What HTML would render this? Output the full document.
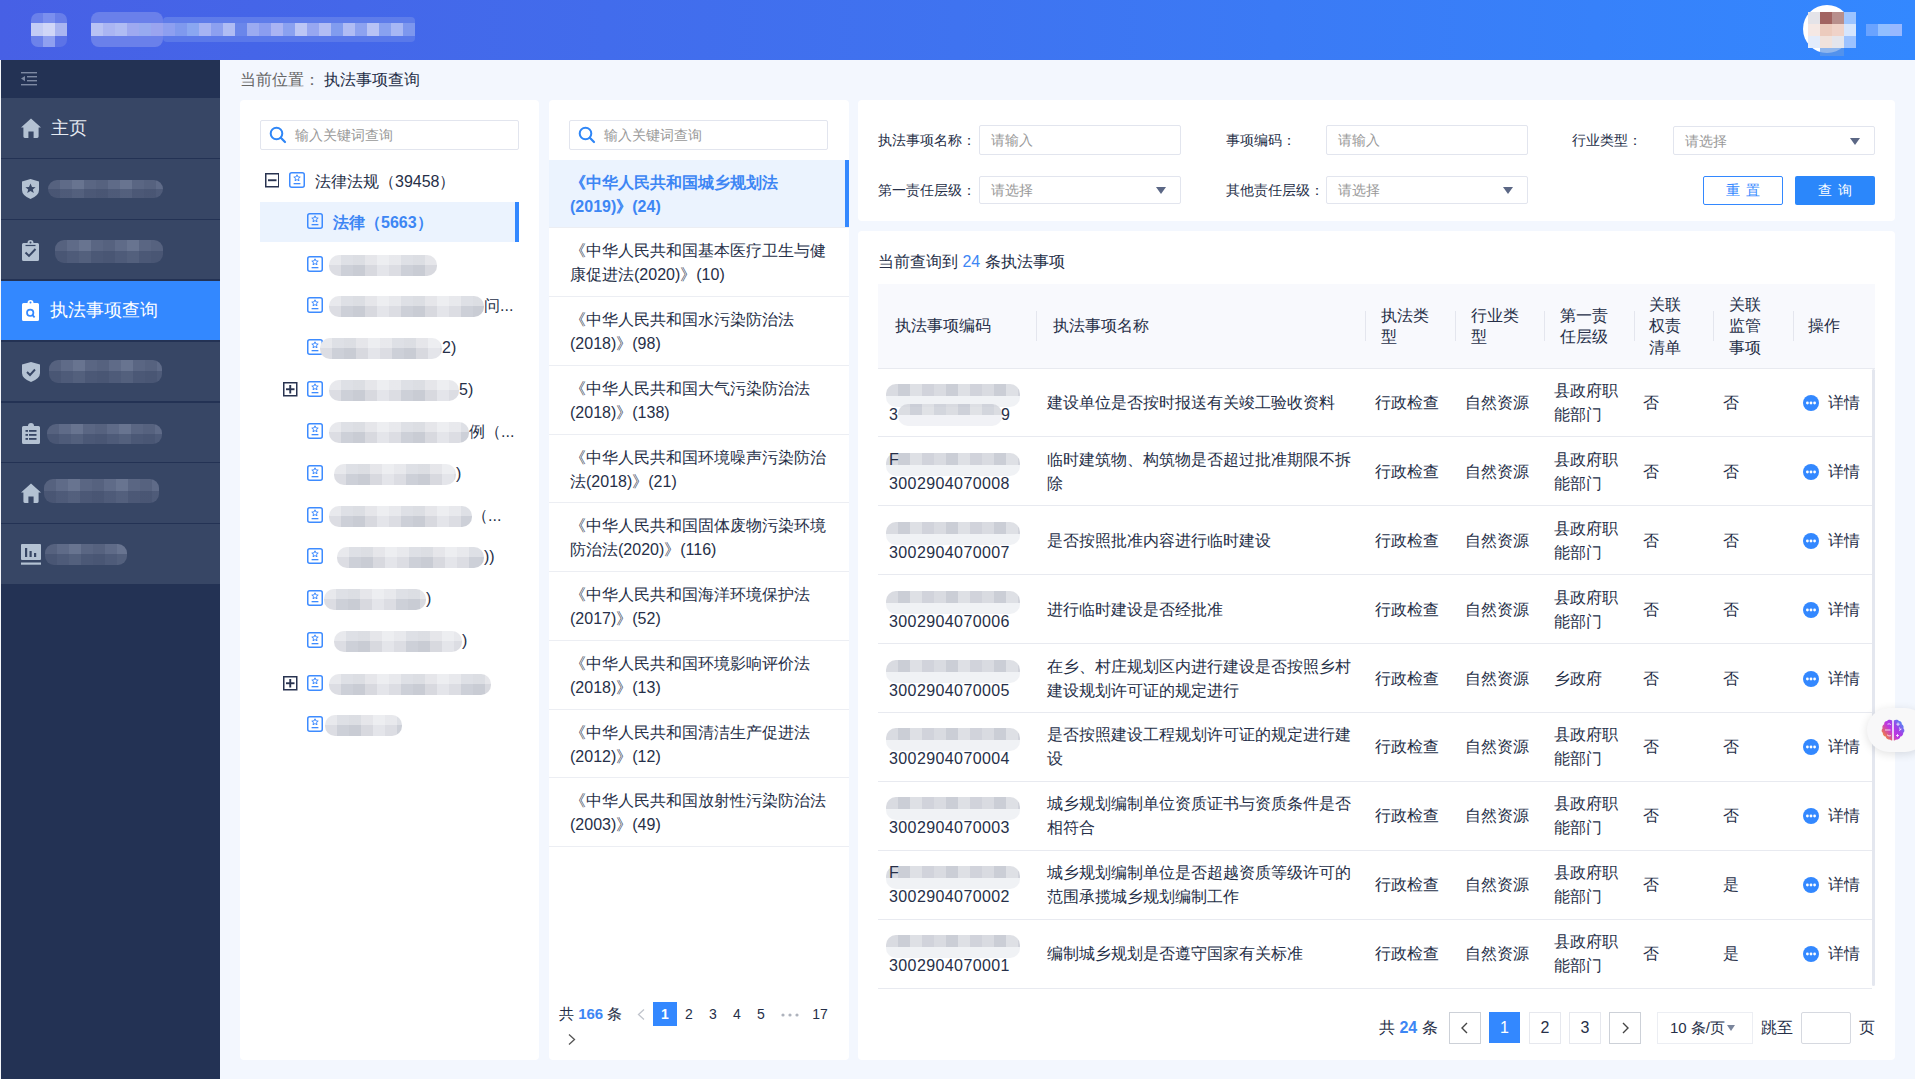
<!DOCTYPE html>
<html><head><meta charset="utf-8">
<style>
*{margin:0;padding:0;box-sizing:border-box}
html,body{width:1915px;height:1079px;overflow:hidden}
body{background:#f3f7fe;font-family:"Liberation Sans",sans-serif;position:relative;color:#262f48;font-size:16px}
.abs{position:absolute}
.hdr{left:0;top:0;width:1915px;height:60px;background:linear-gradient(90deg,#4760e5 0%,#3f73f0 50%,#3388ff 100%)}
.side{left:0;top:60px;width:220px;height:1019px;background:#233254}
.side .bl{position:absolute;left:0;top:0;width:1px;height:1019px;background:#f4f6fa}
.mi{position:absolute;left:1px;width:219px;height:60px;background:#3a4766;color:#fff;font-size:18px;line-height:60px}
.mi.act{background:#3388ff}
.mi svg{position:absolute;left:20px;top:20px}
.mi .t{position:absolute;left:50px;top:0}
.blur{position:absolute;border-radius:8px}
.panel{background:#fff;border-radius:4px}
.crumb{left:240px;top:69px;font-size:16px;line-height:22px;color:#262f48}
</style></head>
<body>
<div class="abs hdr">
  <div class="abs" style="left:31px;top:13px;width:36px;height:34px;border-radius:7px;overflow:hidden;display:grid;grid-template-columns:12px 12px 12px;grid-template-rows:10px 13px 11px">
   <i style="background:#6a80ea"></i><i style="background:#7b8fee"></i><i style="background:#687ee9"></i>
   <i style="background:#c3ccf5"></i><i style="background:#d0d6f7"></i><i style="background:#a9b5f1"></i>
   <i style="background:#6c82ea"></i><i style="background:#8fa0f0"></i><i style="background:#5c73e7"></i>
  </div>
  <div class="abs" style="left:91px;top:12px;width:72px;height:35px;border-radius:8px;overflow:hidden;background:linear-gradient(180deg,#6a80ea 0 11px,rgba(0,0,0,0) 11px 24px,#6a80ea 24px 35px)"></div>
  <div class="abs" style="left:91px;top:23px;width:324px;height:13px;background:linear-gradient(90deg,#b8c2f4 0 12px,#aab5f2 12px 24px,#b0bcf3 24px 36px,#9ea9f0 36px 48px,#97aaf0 48px 60px,#9aa4ef 60px 72px,#8d9ff0 72px 84px,#7f99ee 84px 96px,#8aa7f1 96px 108px,#a6b3f3 108px 120px,#8ca0f0 120px 132px,#afbcf4 132px 144px,#6a86ea 144px 156px,#9babf1 156px 168px,#8b9df0 168px 180px,#aab4f3 180px 192px,#8aa1f0 192px 204px,#bcc6f5 204px 216px,#97a7f1 216px 228px,#b2bdf4 228px 240px,#819cef 240px 252px,#b0bcf4 252px 264px,#8da2f0 264px 276px,#b8c3f5 276px 288px,#88a1f0 288px 300px,#a7b7f4 300px 312px,#7d97ee 312px 324px)"></div>
  <div class="abs" style="left:163px;top:17px;width:252px;height:6px;background:#6582ea;opacity:.8;border-radius:4px 4px 0 0"></div>
  <div class="abs" style="left:163px;top:36px;width:252px;height:6px;background:#5f7dea;opacity:.8;border-radius:0 0 4px 4px"></div>
</div>
<div class="abs side"><div class="bl"></div></div>
<div class="abs" style="left:1px;top:98.0px;width:219px;height:59.7px;background:#374665"></div>
<div class="abs" style="left:1px;top:158.9px;width:219px;height:59.7px;background:#374665"></div>
<div class="abs" style="left:1px;top:219.8px;width:219px;height:59.7px;background:#374665"></div>
<div class="abs" style="left:1px;top:280.7px;width:219px;height:59.7px;background:#3388ff"></div>
<div class="abs" style="left:1px;top:341.6px;width:219px;height:59.7px;background:#374665"></div>
<div class="abs" style="left:1px;top:402.5px;width:219px;height:59.7px;background:#374665"></div>
<div class="abs" style="left:1px;top:463.4px;width:219px;height:59.7px;background:#374665"></div>
<div class="abs" style="left:1px;top:524.3px;width:219px;height:59.7px;background:#374665"></div>
<svg class="abs" style="left:21px;top:72px" width="16" height="14" viewBox="0 0 16 14"><g fill="#7d89a3"><rect x="0" y="0" width="16" height="1.4"/><rect x="6" y="4" width="10" height="1.4"/><rect x="6" y="8" width="10" height="1.4"/><rect x="0" y="12" width="16" height="1.4"/><path d="M0 6.6 L4 4 L4 9.2Z"/></g></svg>
<svg class="abs" style="left:21px;top:118px" width="20" height="20" viewBox="0 0 20 20"><path d="M10 0.5 L20 9.6 L17.6 9.6 L17.6 18.6 Q17.6 20 16.2 20 L12.6 20 L12.6 13.6 L7.4 13.6 L7.4 20 L3.8 20 Q2.4 20 2.4 18.6 L2.4 9.6 L0 9.6 Z" fill="#b4c2d3"/></svg>
<div class="abs" style="left:51px;top:116px;font-size:18px;line-height:24px;color:#e6ebf2;white-space:nowrap">主页</div>
<svg class="abs" style="left:22px;top:179px" width="17" height="20" viewBox="0 0 17 20"><path d="M8.5 0 L17 2.6 L17 11 Q17 16.5 8.5 20 Q0 16.5 0 11 L0 2.6Z" fill="#b4c2d3"/><path d="M8.5 4.6 L10 8 L13.6 8.2 L10.8 10.5 L11.8 14 L8.5 12 L5.2 14 L6.2 10.5 L3.4 8.2 L7 8Z" fill="#374665"/></svg>
<svg class="abs" style="left:22px;top:239.5px" width="17" height="21" viewBox="0 0 17 21"><path d="M1.5 3 L5.5 3 Q5.5 0 8.5 0 Q11.5 0 11.5 3 L15.5 3 Q17 3 17 4.5 L17 19.5 Q17 21 15.5 21 L1.5 21 Q0 21 0 19.5 L0 4.5 Q0 3 1.5 3Z" fill="#b4c2d3"/><path d="M3.5 5.5 H13.5" stroke="#374665" stroke-width="1.2"/><circle cx="8.5" cy="2.6" r="1" fill="#374665"/><path d="M3.5 12.5 L7 16 L13.5 9" stroke="#374665" stroke-width="1.9" fill="none"/></svg>
<svg class="abs" style="left:22px;top:300px" width="17" height="21" viewBox="0 0 17 21"><path d="M1.5 3 L5.5 3 Q5.5 0 8.5 0 Q11.5 0 11.5 3 L15.5 3 Q17 3 17 4.5 L17 19.5 Q17 21 15.5 21 L1.5 21 Q0 21 0 19.5 L0 4.5 Q0 3 1.5 3Z" fill="#fff"/><circle cx="8.5" cy="2.6" r="1" fill="#3388ff"/><circle cx="8.2" cy="12.8" r="3.2" stroke="#3388ff" stroke-width="1.7" fill="none"/><path d="M10.5 15.2 L12.6 17.3" stroke="#3388ff" stroke-width="1.8"/></svg>
<div class="abs" style="left:50px;top:298px;font-size:18px;line-height:24px;color:#fff;white-space:nowrap">执法事项查询</div>
<svg class="abs" style="left:22px;top:362px" width="18" height="20" viewBox="0 0 18 20"><path d="M9 0 L18 2.6 L18 11 Q18 16.5 9 20 Q0 16.5 0 11 L0 2.6Z" fill="#b4c2d3"/><path d="M5 10 L8 13 L13 7.5" stroke="#374665" stroke-width="1.9" fill="none"/></svg>
<svg class="abs" style="left:22px;top:422.5px" width="18" height="21" viewBox="0 0 18 21"><path d="M1.5 3 L6 3 Q6 0 9 0 Q12 0 12 3 L16.5 3 Q18 3 18 4.5 L18 19.5 Q18 21 16.5 21 L1.5 21 Q0 21 0 19.5 L0 4.5 Q0 3 1.5 3Z" fill="#b4c2d3"/><g fill="#374665"><rect x="3.5" y="7" width="2.5" height="1.8"/><rect x="7" y="7" width="7.5" height="1.8"/><rect x="3.5" y="11" width="2.5" height="1.8"/><rect x="7" y="11" width="7.5" height="1.8"/><rect x="3.5" y="15" width="2.5" height="1.8"/><rect x="7" y="15" width="7.5" height="1.8"/></g></svg>
<svg class="abs" style="left:21px;top:483px" width="20" height="20" viewBox="0 0 20 20"><path d="M10 0.5 L20 9.6 L17.6 9.6 L17.6 18.6 Q17.6 20 16.2 20 L12.6 20 L12.6 13.6 L7.4 13.6 L7.4 20 L3.8 20 Q2.4 20 2.4 18.6 L2.4 9.6 L0 9.6 Z" fill="#b4c2d3"/></svg>
<svg class="abs" style="left:21px;top:543.5px" width="20" height="21" viewBox="0 0 20 21"><g fill="#b4c2d3"><rect x="0" y="0" width="20" height="16" rx="1"/><rect x="0" y="18.5" width="20" height="2.2"/></g><g fill="#374665"><rect x="4" y="4" width="2.2" height="9"/><rect x="8.5" y="7" width="2.2" height="6"/><rect x="13" y="9" width="2.2" height="4"/></g></svg>
<div class="abs" style="left:48px;top:180px;width:115px;height:18px;border-radius:9px;background:linear-gradient(180deg,rgba(0,0,0,0) 0 50%,rgba(58,71,102,.45) 50% 100%),repeating-linear-gradient(90deg,#56627f 0 12px,#5f6b88 12px 24px,#687490 24px 36px,#5a6683 36px 48px)"></div>
<div class="abs" style="left:54.5px;top:240px;width:108.5px;height:23px;border-radius:9px;background:linear-gradient(180deg,rgba(0,0,0,0) 0 50%,rgba(58,71,102,.45) 50% 100%),repeating-linear-gradient(90deg,#56627f 0 12px,#5f6b88 12px 24px,#687490 24px 36px,#5a6683 36px 48px)"></div>
<div class="abs" style="left:48.6px;top:360px;width:113.4px;height:23px;border-radius:9px;background:linear-gradient(180deg,rgba(0,0,0,0) 0 50%,rgba(58,71,102,.45) 50% 100%),repeating-linear-gradient(90deg,#56627f 0 12px,#5f6b88 12px 24px,#687490 24px 36px,#5a6683 36px 48px)"></div>
<div class="abs" style="left:47px;top:423.5px;width:115px;height:20.5px;border-radius:9px;background:linear-gradient(180deg,rgba(0,0,0,0) 0 50%,rgba(58,71,102,.45) 50% 100%),repeating-linear-gradient(90deg,#56627f 0 12px,#5f6b88 12px 24px,#687490 24px 36px,#5a6683 36px 48px)"></div>
<div class="abs" style="left:44px;top:479px;width:115px;height:24px;border-radius:9px;background:linear-gradient(180deg,rgba(0,0,0,0) 0 50%,rgba(58,71,102,.45) 50% 100%),repeating-linear-gradient(90deg,#56627f 0 12px,#5f6b88 12px 24px,#687490 24px 36px,#5a6683 36px 48px)"></div>
<div class="abs" style="left:45px;top:543.5px;width:81.5px;height:21.5px;border-radius:9px;background:linear-gradient(180deg,rgba(0,0,0,0) 0 50%,rgba(58,71,102,.45) 50% 100%),repeating-linear-gradient(90deg,#56627f 0 12px,#5f6b88 12px 24px,#687490 24px 36px,#5a6683 36px 48px)"></div>
<div class="abs crumb"><span style="color:#666">当前位置：</span>&nbsp;执法事项查询</div>
<div class="abs panel" style="left:240px;top:100px;width:299px;height:960px"></div>
<div class="abs panel" style="left:549px;top:100px;width:300px;height:960px"></div>
<div class="abs panel" style="left:858px;top:100px;width:1037px;height:121px"></div>
<div class="abs panel" style="left:858px;top:231px;width:1037px;height:829px"></div>

<style>
.t16{position:absolute;font-size:16px;line-height:24px;white-space:nowrap;color:#262f48}
.t14{position:absolute;font-size:14px;line-height:20px;white-space:nowrap;color:#262f48}
.pix{position:absolute;border-radius:10px;background:linear-gradient(180deg,rgba(0,0,0,0) 0 52%,#eef0f4 52% 100%),repeating-linear-gradient(90deg,#d3d5dc 0 12px,#c2c6d0 12px 24px,#d9dbe1 24px 36px,#c9ccd5 36px 48px)}
.inp{position:absolute;border:1px solid #e2e5ee;background:#fff;border-radius:2px}
.ph{position:absolute;font-size:14px;line-height:20px;color:#999;white-space:nowrap}
.tri{position:absolute;width:0;height:0;border-left:5px solid transparent;border-right:5px solid transparent;border-top:7px solid #5b6785}
.ic{position:absolute;width:16px;height:17px}
.pix2{position:absolute;border-radius:10px;background:linear-gradient(180deg,rgba(255,255,255,.35) 0 50%,rgba(255,255,255,0) 50% 100%),repeating-linear-gradient(90deg,#dcdde3 0 12px,#cdd0d8 12px 24px,#c9ccd4 24px 36px,#d8d9df 36px 48px,#e4e5ea 48px 60px)}
</style>

<div class="inp" style="left:260px;top:120px;width:259px;height:30px"></div>
<svg class="abs" style="left:269px;top:126px" width="18" height="18" viewBox="0 0 18 18"><circle cx="7.5" cy="7.5" r="5.8" fill="none" stroke="#2f86f6" stroke-width="2"/><path d="M11.8 11.8 L16 16" stroke="#2f86f6" stroke-width="2.2" stroke-linecap="round"/></svg>
<div class="ph" style="left:295px;top:125px">输入关键词查询</div>
<svg class="ic" style="left:264.5px;top:173px;width:14.5px;height:14.5px" viewBox="0 0 14.5 14.5"><rect x="0.75" y="0.75" width="13" height="13" fill="none" stroke="#283350" stroke-width="1.5"/><rect x="3" y="6.3" width="8.5" height="1.9" fill="#283350"/></svg>
<svg class="ic" style="left:289px;top:172px;width:16px;height:16px" viewBox="0 0 16 16"><rect x="0.75" y="0.75" width="14.5" height="14.5" rx="2" fill="none" stroke="#3d8bff" stroke-width="1.5"/><path d="M8 2.8 L8.95 4.9 L11.2 5.1 L9.5 6.6 L10 8.8 L8 7.6 L6 8.8 L6.5 6.6 L4.8 5.1 L7.05 4.9Z" fill="none" stroke="#3d8bff" stroke-width="1"/><rect x="4.6" y="11" width="6.8" height="1.3" fill="#3d8bff"/></svg>
<div class="t16" style="left:315px;top:170px;color:#262f48">法律法规（39458）</div>
<div class="abs" style="left:260px;top:202px;width:259px;height:40px;background:#ebf3fe"></div>
<div class="abs" style="left:515px;top:202px;width:4px;height:40px;background:#3388ff"></div>
<svg class="ic" style="left:307px;top:213px;width:16px;height:16px" viewBox="0 0 16 16"><rect x="0.75" y="0.75" width="14.5" height="14.5" rx="2" fill="none" stroke="#3d8bff" stroke-width="1.5"/><path d="M8 2.8 L8.95 4.9 L11.2 5.1 L9.5 6.6 L10 8.8 L8 7.6 L6 8.8 L6.5 6.6 L4.8 5.1 L7.05 4.9Z" fill="none" stroke="#3d8bff" stroke-width="1"/><rect x="4.6" y="11" width="6.8" height="1.3" fill="#3d8bff"/></svg>
<div class="t16" style="left:333px;top:211px;color:#3d86f4;font-weight:bold">法律（5663）</div>
<svg class="ic" style="left:307px;top:256px;width:16px;height:16px" viewBox="0 0 16 16"><rect x="0.75" y="0.75" width="14.5" height="14.5" rx="2" fill="none" stroke="#3d8bff" stroke-width="1.5"/><path d="M8 2.8 L8.95 4.9 L11.2 5.1 L9.5 6.6 L10 8.8 L8 7.6 L6 8.8 L6.5 6.6 L4.8 5.1 L7.05 4.9Z" fill="none" stroke="#3d8bff" stroke-width="1"/><rect x="4.6" y="11" width="6.8" height="1.3" fill="#3d8bff"/></svg>
<div class="pix2" style="left:329px;top:255px;width:108px;height:21px"></div>
<svg class="ic" style="left:307px;top:297px;width:16px;height:16px" viewBox="0 0 16 16"><rect x="0.75" y="0.75" width="14.5" height="14.5" rx="2" fill="none" stroke="#3d8bff" stroke-width="1.5"/><path d="M8 2.8 L8.95 4.9 L11.2 5.1 L9.5 6.6 L10 8.8 L8 7.6 L6 8.8 L6.5 6.6 L4.8 5.1 L7.05 4.9Z" fill="none" stroke="#3d8bff" stroke-width="1"/><rect x="4.6" y="11" width="6.8" height="1.3" fill="#3d8bff"/></svg>
<div class="pix2" style="left:329px;top:296px;width:155px;height:21px"></div>
<div class="t16" style="left:484px;top:294px">问...</div>
<svg class="ic" style="left:307px;top:339px;width:16px;height:16px" viewBox="0 0 16 16"><rect x="0.75" y="0.75" width="14.5" height="14.5" rx="2" fill="none" stroke="#3d8bff" stroke-width="1.5"/><path d="M8 2.8 L8.95 4.9 L11.2 5.1 L9.5 6.6 L10 8.8 L8 7.6 L6 8.8 L6.5 6.6 L4.8 5.1 L7.05 4.9Z" fill="none" stroke="#3d8bff" stroke-width="1"/><rect x="4.6" y="11" width="6.8" height="1.3" fill="#3d8bff"/></svg>
<div class="pix2" style="left:320px;top:338px;width:122px;height:21px"></div>
<div class="t16" style="left:442px;top:336px">2)</div>
<svg class="ic" style="left:283px;top:382px;width:14.5px;height:14.5px" viewBox="0 0 14.5 14.5"><rect x="0.75" y="0.75" width="13" height="13" fill="none" stroke="#283350" stroke-width="1.5"/><rect x="3" y="6.3" width="8.5" height="1.9" fill="#283350"/><rect x="6.3" y="3" width="1.9" height="8.5" fill="#283350"/></svg>
<svg class="ic" style="left:307px;top:381px;width:16px;height:16px" viewBox="0 0 16 16"><rect x="0.75" y="0.75" width="14.5" height="14.5" rx="2" fill="none" stroke="#3d8bff" stroke-width="1.5"/><path d="M8 2.8 L8.95 4.9 L11.2 5.1 L9.5 6.6 L10 8.8 L8 7.6 L6 8.8 L6.5 6.6 L4.8 5.1 L7.05 4.9Z" fill="none" stroke="#3d8bff" stroke-width="1"/><rect x="4.6" y="11" width="6.8" height="1.3" fill="#3d8bff"/></svg>
<div class="pix2" style="left:329px;top:380px;width:130px;height:21px"></div>
<div class="t16" style="left:459px;top:378px">5)</div>
<svg class="ic" style="left:307px;top:423px;width:16px;height:16px" viewBox="0 0 16 16"><rect x="0.75" y="0.75" width="14.5" height="14.5" rx="2" fill="none" stroke="#3d8bff" stroke-width="1.5"/><path d="M8 2.8 L8.95 4.9 L11.2 5.1 L9.5 6.6 L10 8.8 L8 7.6 L6 8.8 L6.5 6.6 L4.8 5.1 L7.05 4.9Z" fill="none" stroke="#3d8bff" stroke-width="1"/><rect x="4.6" y="11" width="6.8" height="1.3" fill="#3d8bff"/></svg>
<div class="pix2" style="left:329px;top:422px;width:140px;height:21px"></div>
<div class="t16" style="left:469px;top:420px">例（...</div>
<svg class="ic" style="left:307px;top:465px;width:16px;height:16px" viewBox="0 0 16 16"><rect x="0.75" y="0.75" width="14.5" height="14.5" rx="2" fill="none" stroke="#3d8bff" stroke-width="1.5"/><path d="M8 2.8 L8.95 4.9 L11.2 5.1 L9.5 6.6 L10 8.8 L8 7.6 L6 8.8 L6.5 6.6 L4.8 5.1 L7.05 4.9Z" fill="none" stroke="#3d8bff" stroke-width="1"/><rect x="4.6" y="11" width="6.8" height="1.3" fill="#3d8bff"/></svg>
<div class="pix2" style="left:334px;top:464px;width:122px;height:21px"></div>
<div class="t16" style="left:456px;top:462px">)</div>
<svg class="ic" style="left:307px;top:507px;width:16px;height:16px" viewBox="0 0 16 16"><rect x="0.75" y="0.75" width="14.5" height="14.5" rx="2" fill="none" stroke="#3d8bff" stroke-width="1.5"/><path d="M8 2.8 L8.95 4.9 L11.2 5.1 L9.5 6.6 L10 8.8 L8 7.6 L6 8.8 L6.5 6.6 L4.8 5.1 L7.05 4.9Z" fill="none" stroke="#3d8bff" stroke-width="1"/><rect x="4.6" y="11" width="6.8" height="1.3" fill="#3d8bff"/></svg>
<div class="pix2" style="left:329px;top:506px;width:143px;height:21px"></div>
<div class="t16" style="left:472px;top:504px">（...</div>
<svg class="ic" style="left:307px;top:548px;width:16px;height:16px" viewBox="0 0 16 16"><rect x="0.75" y="0.75" width="14.5" height="14.5" rx="2" fill="none" stroke="#3d8bff" stroke-width="1.5"/><path d="M8 2.8 L8.95 4.9 L11.2 5.1 L9.5 6.6 L10 8.8 L8 7.6 L6 8.8 L6.5 6.6 L4.8 5.1 L7.05 4.9Z" fill="none" stroke="#3d8bff" stroke-width="1"/><rect x="4.6" y="11" width="6.8" height="1.3" fill="#3d8bff"/></svg>
<div class="pix2" style="left:337px;top:547px;width:147px;height:21px"></div>
<div class="t16" style="left:484px;top:545px">))</div>
<svg class="ic" style="left:307px;top:590px;width:16px;height:16px" viewBox="0 0 16 16"><rect x="0.75" y="0.75" width="14.5" height="14.5" rx="2" fill="none" stroke="#3d8bff" stroke-width="1.5"/><path d="M8 2.8 L8.95 4.9 L11.2 5.1 L9.5 6.6 L10 8.8 L8 7.6 L6 8.8 L6.5 6.6 L4.8 5.1 L7.05 4.9Z" fill="none" stroke="#3d8bff" stroke-width="1"/><rect x="4.6" y="11" width="6.8" height="1.3" fill="#3d8bff"/></svg>
<div class="pix2" style="left:324px;top:589px;width:102px;height:21px"></div>
<div class="t16" style="left:426px;top:587px">)</div>
<svg class="ic" style="left:307px;top:632px;width:16px;height:16px" viewBox="0 0 16 16"><rect x="0.75" y="0.75" width="14.5" height="14.5" rx="2" fill="none" stroke="#3d8bff" stroke-width="1.5"/><path d="M8 2.8 L8.95 4.9 L11.2 5.1 L9.5 6.6 L10 8.8 L8 7.6 L6 8.8 L6.5 6.6 L4.8 5.1 L7.05 4.9Z" fill="none" stroke="#3d8bff" stroke-width="1"/><rect x="4.6" y="11" width="6.8" height="1.3" fill="#3d8bff"/></svg>
<div class="pix2" style="left:334px;top:631px;width:128px;height:21px"></div>
<div class="t16" style="left:462px;top:629px">)</div>
<svg class="ic" style="left:283px;top:676px;width:14.5px;height:14.5px" viewBox="0 0 14.5 14.5"><rect x="0.75" y="0.75" width="13" height="13" fill="none" stroke="#283350" stroke-width="1.5"/><rect x="3" y="6.3" width="8.5" height="1.9" fill="#283350"/><rect x="6.3" y="3" width="1.9" height="8.5" fill="#283350"/></svg>
<svg class="ic" style="left:307px;top:675px;width:16px;height:16px" viewBox="0 0 16 16"><rect x="0.75" y="0.75" width="14.5" height="14.5" rx="2" fill="none" stroke="#3d8bff" stroke-width="1.5"/><path d="M8 2.8 L8.95 4.9 L11.2 5.1 L9.5 6.6 L10 8.8 L8 7.6 L6 8.8 L6.5 6.6 L4.8 5.1 L7.05 4.9Z" fill="none" stroke="#3d8bff" stroke-width="1"/><rect x="4.6" y="11" width="6.8" height="1.3" fill="#3d8bff"/></svg>
<div class="pix2" style="left:329px;top:674px;width:162px;height:21px"></div>
<svg class="ic" style="left:307px;top:716px;width:16px;height:16px" viewBox="0 0 16 16"><rect x="0.75" y="0.75" width="14.5" height="14.5" rx="2" fill="none" stroke="#3d8bff" stroke-width="1.5"/><path d="M8 2.8 L8.95 4.9 L11.2 5.1 L9.5 6.6 L10 8.8 L8 7.6 L6 8.8 L6.5 6.6 L4.8 5.1 L7.05 4.9Z" fill="none" stroke="#3d8bff" stroke-width="1"/><rect x="4.6" y="11" width="6.8" height="1.3" fill="#3d8bff"/></svg>
<div class="pix2" style="left:325px;top:715px;width:77px;height:21px"></div>
<div class="inp" style="left:569px;top:120px;width:259px;height:30px"></div>
<svg class="abs" style="left:578px;top:126px" width="18" height="18" viewBox="0 0 18 18"><circle cx="7.5" cy="7.5" r="5.8" fill="none" stroke="#2f86f6" stroke-width="2"/><path d="M11.8 11.8 L16 16" stroke="#2f86f6" stroke-width="2.2" stroke-linecap="round"/></svg>
<div class="ph" style="left:604px;top:125px">输入关键词查询</div>
<div class="abs" style="left:549px;top:159.6px;width:300px;height:68.75px;background:#ebf3fe"></div>
<div class="abs" style="left:845px;top:159.6px;width:4px;height:68.75px;background:#3388ff"></div>
<div class="abs" style="left:549px;top:227.35px;width:300px;height:1px;background:#eceef3"></div>
<div class="t16" style="left:570px;top:170.5px;color:#3d86f4;font-weight:bold">《中华人民共和国城乡规划法<br>(2019)》(24)</div>
<div class="abs" style="left:549px;top:296.1px;width:300px;height:1px;background:#eceef3"></div>
<div class="t16" style="left:570px;top:239.25px;">《中华人民共和国基本医疗卫生与健<br>康促进法(2020)》(10)</div>
<div class="abs" style="left:549px;top:364.85px;width:300px;height:1px;background:#eceef3"></div>
<div class="t16" style="left:570px;top:308.0px;">《中华人民共和国水污染防治法<br>(2018)》(98)</div>
<div class="abs" style="left:549px;top:433.6px;width:300px;height:1px;background:#eceef3"></div>
<div class="t16" style="left:570px;top:376.75px;">《中华人民共和国大气污染防治法<br>(2018)》(138)</div>
<div class="abs" style="left:549px;top:502.35px;width:300px;height:1px;background:#eceef3"></div>
<div class="t16" style="left:570px;top:445.5px;">《中华人民共和国环境噪声污染防治<br>法(2018)》(21)</div>
<div class="abs" style="left:549px;top:571.1px;width:300px;height:1px;background:#eceef3"></div>
<div class="t16" style="left:570px;top:514.25px;">《中华人民共和国固体废物污染环境<br>防治法(2020)》(116)</div>
<div class="abs" style="left:549px;top:639.85px;width:300px;height:1px;background:#eceef3"></div>
<div class="t16" style="left:570px;top:583.0px;">《中华人民共和国海洋环境保护法<br>(2017)》(52)</div>
<div class="abs" style="left:549px;top:708.6px;width:300px;height:1px;background:#eceef3"></div>
<div class="t16" style="left:570px;top:651.75px;">《中华人民共和国环境影响评价法<br>(2018)》(13)</div>
<div class="abs" style="left:549px;top:777.35px;width:300px;height:1px;background:#eceef3"></div>
<div class="t16" style="left:570px;top:720.5px;">《中华人民共和国清洁生产促进法<br>(2012)》(12)</div>
<div class="abs" style="left:549px;top:846.1px;width:300px;height:1px;background:#eceef3"></div>
<div class="t16" style="left:570px;top:789.25px;">《中华人民共和国放射性污染防治法<br>(2003)》(49)</div>
<div class="t14" style="left:559px;top:1004px;font-size:15px">共 <b style="color:#3d86f4">166</b> 条</div>
<svg class="abs" style="left:637px;top:1009px" width="8" height="11" viewBox="0 0 8 11"><path d="M7 0.5 L1.5 5.5 L7 10.5" fill="none" stroke="#c0c4cc" stroke-width="1.3"/></svg>
<div class="abs" style="left:653px;top:1002px;width:24px;height:24px;background:#3388ff;color:#fff;font-size:14px;line-height:24px;text-align:center;font-weight:bold">1</div>
<svg class="abs" style="left:781px;top:1012.5px" width="18" height="4" viewBox="0 0 18 4"><circle cx="2" cy="2" r="1.6" fill="#aeb3bd"/><circle cx="9" cy="2" r="1.6" fill="#aeb3bd"/><circle cx="16" cy="2" r="1.6" fill="#aeb3bd"/></svg>
<div class="t14" style="left:677px;top:1004px;width:24px;text-align:center;">2</div>
<div class="t14" style="left:701px;top:1004px;width:24px;text-align:center;">3</div>
<div class="t14" style="left:725px;top:1004px;width:24px;text-align:center;">4</div>
<div class="t14" style="left:749px;top:1004px;width:24px;text-align:center;">5</div>
<div class="t14" style="left:808px;top:1004px;width:24px;text-align:center;">17</div>
<svg class="abs" style="left:568px;top:1034px" width="8" height="11" viewBox="0 0 8 11"><path d="M1 0.5 L6.5 5.5 L1 10.5" fill="none" stroke="#555" stroke-width="1.3"/></svg>
<div class="t14" style="left:878px;top:130px">执法事项名称：</div>
<div class="t14" style="left:1226px;top:130px">事项编码：</div>
<div class="t14" style="left:1572px;top:130px">行业类型：</div>
<div class="t14" style="left:878px;top:180px">第一责任层级：</div>
<div class="t14" style="left:1226px;top:180px">其他责任层级：</div>
<div class="inp" style="left:979px;top:125px;width:202px;height:30px"></div>
<div class="ph" style="left:991px;top:130.0px">请输入</div>
<div class="inp" style="left:1326px;top:125px;width:202px;height:30px"></div>
<div class="ph" style="left:1338px;top:130.0px">请输入</div>
<div class="inp" style="left:1673px;top:126px;width:202px;height:29px"></div>
<div class="ph" style="left:1685px;top:130.5px">请选择</div>
<div class="tri" style="left:1850px;top:137.5px"></div>
<div class="inp" style="left:979px;top:176px;width:202px;height:28px"></div>
<div class="ph" style="left:991px;top:180.0px">请选择</div>
<div class="tri" style="left:1156px;top:187.0px"></div>
<div class="inp" style="left:1326px;top:176px;width:202px;height:28px"></div>
<div class="ph" style="left:1338px;top:180.0px">请选择</div>
<div class="tri" style="left:1503px;top:187.0px"></div>
<div class="abs" style="left:1703px;top:176px;width:80px;height:29px;border:1px solid #3388ff;border-radius:2px;color:#3388ff;font-size:14px;line-height:27px;text-align:center;letter-spacing:6px;padding-left:6px">重置</div>
<div class="abs" style="left:1795px;top:176px;width:80px;height:29px;background:#2b87fb;border-radius:2px;color:#fff;font-size:14px;line-height:29px;text-align:center;letter-spacing:6px;padding-left:6px">查询</div>
<div class="t16" style="left:878px;top:250px">当前查询到 <span style="color:#3d86f4">24</span> 条执法事项</div>
<div class="abs" style="left:878px;top:284px;width:997px;height:85px;background:#f8f9fd;border-bottom:1px solid #e8eaf0"></div>
<div class="abs" style="left:1036px;top:311px;width:1px;height:30px;background:#e4e6ee"></div>
<div class="abs" style="left:1364.7px;top:311px;width:1px;height:30px;background:#e4e6ee"></div>
<div class="abs" style="left:1454.7px;top:311px;width:1px;height:30px;background:#e4e6ee"></div>
<div class="abs" style="left:1543.9px;top:311px;width:1px;height:30px;background:#e4e6ee"></div>
<div class="abs" style="left:1633.9px;top:311px;width:1px;height:30px;background:#e4e6ee"></div>
<div class="abs" style="left:1713px;top:311px;width:1px;height:30px;background:#e4e6ee"></div>
<div class="abs" style="left:1792.6px;top:311px;width:1px;height:30px;background:#e4e6ee"></div>
<div class="abs" style="left:895px;top:315.25px;font-size:16px;line-height:21.5px;color:#262f48;white-space:nowrap">执法事项编码</div>
<div class="abs" style="left:1053px;top:315.25px;font-size:16px;line-height:21.5px;color:#262f48;white-space:nowrap">执法事项名称</div>
<div class="abs" style="left:1381px;top:304.5px;font-size:16px;line-height:21.5px;color:#262f48;white-space:nowrap">执法类<br>型</div>
<div class="abs" style="left:1471px;top:304.5px;font-size:16px;line-height:21.5px;color:#262f48;white-space:nowrap">行业类<br>型</div>
<div class="abs" style="left:1560px;top:304.5px;font-size:16px;line-height:21.5px;color:#262f48;white-space:nowrap">第一责<br>任层级</div>
<div class="abs" style="left:1649px;top:293.75px;font-size:16px;line-height:21.5px;color:#262f48;white-space:nowrap">关联<br>权责<br>清单</div>
<div class="abs" style="left:1729px;top:293.75px;font-size:16px;line-height:21.5px;color:#262f48;white-space:nowrap">关联<br>监管<br>事项</div>
<div class="abs" style="left:1808px;top:315.25px;font-size:16px;line-height:21.5px;color:#262f48;white-space:nowrap">操作</div>
<div class="abs" style="left:878px;top:436.4px;width:994px;height:1px;background:#e8eaf0"></div>
<div class="pix" style="left:886px;top:383.95px;width:134px;height:23px;opacity:.85"></div>
<div class="t16" style="left:889px;top:402.95px">3</div><div class="pix" style="left:898px;top:403.95px;width:104px;height:22px;opacity:.8"></div><div class="t16" style="left:1001px;top:402.95px">9</div>
<div class="t16" style="left:1047px;top:390.95px">建设单位是否按时报送有关竣工验收资料</div>
<div class="t16" style="left:1375px;top:390.95px">行政检查</div>
<div class="t16" style="left:1465px;top:390.95px">自然资源</div>
<div class="t16" style="left:1554px;top:378.95px">县政府职<br>能部门</div>
<div class="t16" style="left:1643px;top:390.95px">否</div>
<div class="t16" style="left:1723px;top:390.95px">否</div>
<svg class="abs" style="left:1803px;top:394.95px" width="16" height="16" viewBox="0 0 16 16"><circle cx="8" cy="8" r="8" fill="#3388ff"/><circle cx="4.4" cy="8" r="1.4" fill="#fff"/><circle cx="8" cy="8" r="1.4" fill="#fff"/><circle cx="11.6" cy="8" r="1.4" fill="#fff"/></svg>
<div class="t16" style="left:1828px;top:390.95px">详情</div>
<div class="abs" style="left:878px;top:505.29999999999995px;width:994px;height:1px;background:#e8eaf0"></div>
<div class="pix" style="left:886px;top:452.84999999999997px;width:134px;height:23px;opacity:.85"></div>
<div class="t16" style="left:889px;top:471.84999999999997px;letter-spacing:0.4px">3002904070008</div>
<div class="t16" style="left:889px;top:447.84999999999997px">F</div>
<div class="t16" style="left:1047px;top:447.84999999999997px">临时建筑物、构筑物是否超过批准期限不拆<br>除</div>
<div class="t16" style="left:1375px;top:459.84999999999997px">行政检查</div>
<div class="t16" style="left:1465px;top:459.84999999999997px">自然资源</div>
<div class="t16" style="left:1554px;top:447.84999999999997px">县政府职<br>能部门</div>
<div class="t16" style="left:1643px;top:459.84999999999997px">否</div>
<div class="t16" style="left:1723px;top:459.84999999999997px">否</div>
<svg class="abs" style="left:1803px;top:463.84999999999997px" width="16" height="16" viewBox="0 0 16 16"><circle cx="8" cy="8" r="8" fill="#3388ff"/><circle cx="4.4" cy="8" r="1.4" fill="#fff"/><circle cx="8" cy="8" r="1.4" fill="#fff"/><circle cx="11.6" cy="8" r="1.4" fill="#fff"/></svg>
<div class="t16" style="left:1828px;top:459.84999999999997px">详情</div>
<div class="abs" style="left:878px;top:574.2px;width:994px;height:1px;background:#e8eaf0"></div>
<div class="pix" style="left:886px;top:521.75px;width:134px;height:23px;opacity:.85"></div>
<div class="t16" style="left:889px;top:540.75px;letter-spacing:0.4px">3002904070007</div>
<div class="t16" style="left:1047px;top:528.75px">是否按照批准内容进行临时建设</div>
<div class="t16" style="left:1375px;top:528.75px">行政检查</div>
<div class="t16" style="left:1465px;top:528.75px">自然资源</div>
<div class="t16" style="left:1554px;top:516.75px">县政府职<br>能部门</div>
<div class="t16" style="left:1643px;top:528.75px">否</div>
<div class="t16" style="left:1723px;top:528.75px">否</div>
<svg class="abs" style="left:1803px;top:532.75px" width="16" height="16" viewBox="0 0 16 16"><circle cx="8" cy="8" r="8" fill="#3388ff"/><circle cx="4.4" cy="8" r="1.4" fill="#fff"/><circle cx="8" cy="8" r="1.4" fill="#fff"/><circle cx="11.6" cy="8" r="1.4" fill="#fff"/></svg>
<div class="t16" style="left:1828px;top:528.75px">详情</div>
<div class="abs" style="left:878px;top:643.1px;width:994px;height:1px;background:#e8eaf0"></div>
<div class="pix" style="left:886px;top:590.6500000000001px;width:134px;height:23px;opacity:.85"></div>
<div class="t16" style="left:889px;top:609.6500000000001px;letter-spacing:0.4px">3002904070006</div>
<div class="t16" style="left:1047px;top:597.6500000000001px">进行临时建设是否经批准</div>
<div class="t16" style="left:1375px;top:597.6500000000001px">行政检查</div>
<div class="t16" style="left:1465px;top:597.6500000000001px">自然资源</div>
<div class="t16" style="left:1554px;top:585.6500000000001px">县政府职<br>能部门</div>
<div class="t16" style="left:1643px;top:597.6500000000001px">否</div>
<div class="t16" style="left:1723px;top:597.6500000000001px">否</div>
<svg class="abs" style="left:1803px;top:601.6500000000001px" width="16" height="16" viewBox="0 0 16 16"><circle cx="8" cy="8" r="8" fill="#3388ff"/><circle cx="4.4" cy="8" r="1.4" fill="#fff"/><circle cx="8" cy="8" r="1.4" fill="#fff"/><circle cx="11.6" cy="8" r="1.4" fill="#fff"/></svg>
<div class="t16" style="left:1828px;top:597.6500000000001px">详情</div>
<div class="abs" style="left:878px;top:712.0px;width:994px;height:1px;background:#e8eaf0"></div>
<div class="pix" style="left:886px;top:659.5500000000001px;width:134px;height:23px;opacity:.85"></div>
<div class="t16" style="left:889px;top:678.5500000000001px;letter-spacing:0.4px">3002904070005</div>
<div class="t16" style="left:1047px;top:654.5500000000001px">在乡、村庄规划区内进行建设是否按照乡村<br>建设规划许可证的规定进行</div>
<div class="t16" style="left:1375px;top:666.5500000000001px">行政检查</div>
<div class="t16" style="left:1465px;top:666.5500000000001px">自然资源</div>
<div class="t16" style="left:1554px;top:666.5500000000001px">乡政府</div>
<div class="t16" style="left:1643px;top:666.5500000000001px">否</div>
<div class="t16" style="left:1723px;top:666.5500000000001px">否</div>
<svg class="abs" style="left:1803px;top:670.5500000000001px" width="16" height="16" viewBox="0 0 16 16"><circle cx="8" cy="8" r="8" fill="#3388ff"/><circle cx="4.4" cy="8" r="1.4" fill="#fff"/><circle cx="8" cy="8" r="1.4" fill="#fff"/><circle cx="11.6" cy="8" r="1.4" fill="#fff"/></svg>
<div class="t16" style="left:1828px;top:666.5500000000001px">详情</div>
<div class="abs" style="left:878px;top:780.9px;width:994px;height:1px;background:#e8eaf0"></div>
<div class="pix" style="left:886px;top:728.45px;width:134px;height:23px;opacity:.85"></div>
<div class="t16" style="left:889px;top:747.45px;letter-spacing:0.4px">3002904070004</div>
<div class="t16" style="left:1047px;top:723.45px">是否按照建设工程规划许可证的规定进行建<br>设</div>
<div class="t16" style="left:1375px;top:735.45px">行政检查</div>
<div class="t16" style="left:1465px;top:735.45px">自然资源</div>
<div class="t16" style="left:1554px;top:723.45px">县政府职<br>能部门</div>
<div class="t16" style="left:1643px;top:735.45px">否</div>
<div class="t16" style="left:1723px;top:735.45px">否</div>
<svg class="abs" style="left:1803px;top:739.45px" width="16" height="16" viewBox="0 0 16 16"><circle cx="8" cy="8" r="8" fill="#3388ff"/><circle cx="4.4" cy="8" r="1.4" fill="#fff"/><circle cx="8" cy="8" r="1.4" fill="#fff"/><circle cx="11.6" cy="8" r="1.4" fill="#fff"/></svg>
<div class="t16" style="left:1828px;top:735.45px">详情</div>
<div class="abs" style="left:878px;top:849.8000000000001px;width:994px;height:1px;background:#e8eaf0"></div>
<div class="pix" style="left:886px;top:797.3500000000001px;width:134px;height:23px;opacity:.85"></div>
<div class="t16" style="left:889px;top:816.3500000000001px;letter-spacing:0.4px">3002904070003</div>
<div class="t16" style="left:1047px;top:792.3500000000001px">城乡规划编制单位资质证书与资质条件是否<br>相符合</div>
<div class="t16" style="left:1375px;top:804.3500000000001px">行政检查</div>
<div class="t16" style="left:1465px;top:804.3500000000001px">自然资源</div>
<div class="t16" style="left:1554px;top:792.3500000000001px">县政府职<br>能部门</div>
<div class="t16" style="left:1643px;top:804.3500000000001px">否</div>
<div class="t16" style="left:1723px;top:804.3500000000001px">否</div>
<svg class="abs" style="left:1803px;top:808.3500000000001px" width="16" height="16" viewBox="0 0 16 16"><circle cx="8" cy="8" r="8" fill="#3388ff"/><circle cx="4.4" cy="8" r="1.4" fill="#fff"/><circle cx="8" cy="8" r="1.4" fill="#fff"/><circle cx="11.6" cy="8" r="1.4" fill="#fff"/></svg>
<div class="t16" style="left:1828px;top:804.3500000000001px">详情</div>
<div class="abs" style="left:878px;top:918.7px;width:994px;height:1px;background:#e8eaf0"></div>
<div class="pix" style="left:886px;top:866.2500000000001px;width:134px;height:23px;opacity:.85"></div>
<div class="t16" style="left:889px;top:885.2500000000001px;letter-spacing:0.4px">3002904070002</div>
<div class="t16" style="left:889px;top:861.2500000000001px">F</div>
<div class="t16" style="left:1047px;top:861.2500000000001px">城乡规划编制单位是否超越资质等级许可的<br>范围承揽城乡规划编制工作</div>
<div class="t16" style="left:1375px;top:873.2500000000001px">行政检查</div>
<div class="t16" style="left:1465px;top:873.2500000000001px">自然资源</div>
<div class="t16" style="left:1554px;top:861.2500000000001px">县政府职<br>能部门</div>
<div class="t16" style="left:1643px;top:873.2500000000001px">否</div>
<div class="t16" style="left:1723px;top:873.2500000000001px">是</div>
<svg class="abs" style="left:1803px;top:877.2500000000001px" width="16" height="16" viewBox="0 0 16 16"><circle cx="8" cy="8" r="8" fill="#3388ff"/><circle cx="4.4" cy="8" r="1.4" fill="#fff"/><circle cx="8" cy="8" r="1.4" fill="#fff"/><circle cx="11.6" cy="8" r="1.4" fill="#fff"/></svg>
<div class="t16" style="left:1828px;top:873.2500000000001px">详情</div>
<div class="abs" style="left:878px;top:987.6px;width:994px;height:1px;background:#e8eaf0"></div>
<div class="pix" style="left:886px;top:935.1500000000001px;width:134px;height:23px;opacity:.85"></div>
<div class="t16" style="left:889px;top:954.1500000000001px;letter-spacing:0.4px">3002904070001</div>
<div class="t16" style="left:1047px;top:942.1500000000001px">编制城乡规划是否遵守国家有关标准</div>
<div class="t16" style="left:1375px;top:942.1500000000001px">行政检查</div>
<div class="t16" style="left:1465px;top:942.1500000000001px">自然资源</div>
<div class="t16" style="left:1554px;top:930.1500000000001px">县政府职<br>能部门</div>
<div class="t16" style="left:1643px;top:942.1500000000001px">否</div>
<div class="t16" style="left:1723px;top:942.1500000000001px">是</div>
<svg class="abs" style="left:1803px;top:946.1500000000001px" width="16" height="16" viewBox="0 0 16 16"><circle cx="8" cy="8" r="8" fill="#3388ff"/><circle cx="4.4" cy="8" r="1.4" fill="#fff"/><circle cx="8" cy="8" r="1.4" fill="#fff"/><circle cx="11.6" cy="8" r="1.4" fill="#fff"/></svg>
<div class="t16" style="left:1828px;top:942.1500000000001px">详情</div>
<div class="abs" style="left:1872px;top:369px;width:3px;height:617px;background:#e4e7ef;border-radius:2px"></div>
<div class="abs" style="left:1379px;top:1016px;font-size:16px;line-height:24px;color:#262f48;white-space:nowrap">共 <b style="color:#3d86f4">24</b> 条</div>
<div class="abs" style="left:1449px;top:1012px;width:32px;height:32px;border:1px solid #cdd1d8;color:#262f48;font-size:16px;line-height:30px;text-align:center"><svg width="10" height="12" viewBox="0 0 10 12" style="margin-top:9px"><path d="M7 1 L2 6 L7 11" fill="none" stroke="#444" stroke-width="1.4"/></svg></div>
<div class="abs" style="left:1489px;top:1012px;width:31px;height:31px;background:#3388ff;color:#fff;font-size:16px;line-height:31px;text-align:center">1</div>
<div class="abs" style="left:1529px;top:1012px;width:32px;height:32px;border:1px solid #e6e8ee;color:#262f48;font-size:16px;line-height:30px;text-align:center">2</div>
<div class="abs" style="left:1569px;top:1012px;width:32px;height:32px;border:1px solid #e6e8ee;color:#262f48;font-size:16px;line-height:30px;text-align:center">3</div>
<div class="abs" style="left:1609px;top:1012px;width:32px;height:32px;border:1px solid #cdd1d8;color:#262f48;font-size:16px;line-height:30px;text-align:center"><svg width="10" height="12" viewBox="0 0 10 12" style="margin-top:9px"><path d="M3 1 L8 6 L3 11" fill="none" stroke="#444" stroke-width="1.4"/></svg></div>
<div class="abs" style="left:1657px;top:1012px;width:96px;height:32px;border:1px solid #eceef3;font-size:15px;line-height:30px;color:#262f48;padding-left:12px;white-space:nowrap">10 条/页</div>
<div class="tri" style="left:1727px;top:1025px;border-top-color:#7a859c;border-left-width:4px;border-right-width:4px;border-top-width:6px"></div>
<div class="t16" style="left:1761px;top:1016px">跳至</div>
<div class="abs" style="left:1801px;top:1012px;width:50px;height:32px;border:1px solid #d6d9e0;border-radius:2px"></div>
<div class="t16" style="left:1859px;top:1016px">页</div>
<div class="abs" style="left:1867px;top:708px;width:60px;height:44px;border-radius:22px;background:#f8f8f9;box-shadow:0 2px 10px rgba(0,0,0,.12)"></div>
<svg class="abs" style="left:1881px;top:719px" width="24" height="22" viewBox="0 0 24 22"><defs><linearGradient id="bg1" gradientUnits="userSpaceOnUse" x1="2" y1="19" x2="22" y2="3"><stop offset="0" stop-color="#f7a030"/><stop offset=".2" stop-color="#e0607a"/><stop offset=".45" stop-color="#be36e2"/><stop offset=".65" stop-color="#a43fe6"/><stop offset="1" stop-color="#4b92f6"/></linearGradient></defs><g fill="url(#bg1)"><path d="M11.2 1.6 C9.6 0.2 7 0.4 6 2 C4 2 3 3.5 3.2 5.2 C1.6 6 1 7.6 1.6 9.2 C0.2 10.5 0.3 12.8 1.8 13.8 C1.6 15.8 2.8 17.4 4.6 17.6 C5 19.8 7 21 9 20.6 C9.8 21.5 10.9 21.6 11.2 21.4 Z"/><path d="M12.8 1.6 C14.4 0.2 17 0.4 18 2 C20 2 21 3.5 20.8 5.2 C22.4 6 23 7.6 22.4 9.2 C23.8 10.5 23.7 12.8 22.2 13.8 C22.4 15.8 21.2 17.4 19.4 17.6 C19 19.8 17 21 15 20.6 C14.2 21.5 13.1 21.6 12.8 21.4 Z"/></g><g stroke="#fff" stroke-width="0.9" fill="none" opacity=".85"><path d="M4 11 H9.5"/><path d="M6.5 5.2 Q8.5 4.2 9.8 5.6"/><path d="M6 15.8 Q8 17.8 9.8 16.6"/><path d="M17 3.5 V7 M15.3 5.2 H18.7"/><path d="M18.5 8.5 L19.5 11 M20.5 10 L18 11.5"/><path d="M16.5 15 V18 M15 16.5 H18"/></g></svg>
<div class="abs" style="left:1803px;top:5px;width:48px;height:48px;border-radius:24px;background:#fff"></div>
<div class="abs" style="left:1808px;top:12px;width:12px;height:12px;background:#e4e3e8"></div><div class="abs" style="left:1820px;top:12px;width:12px;height:12px;background:#a26461"></div><div class="abs" style="left:1832px;top:12px;width:12px;height:12px;background:#b88f8c"></div><div class="abs" style="left:1844px;top:12px;width:12px;height:12px;background:#9cc4ff"></div>
<div class="abs" style="left:1808px;top:24px;width:12px;height:12px;background:#f5e8e4"></div><div class="abs" style="left:1820px;top:24px;width:12px;height:12px;background:#eccbbd"></div><div class="abs" style="left:1832px;top:24px;width:12px;height:12px;background:#efd2c8"></div><div class="abs" style="left:1844px;top:24px;width:12px;height:12px;background:#d6e5fd"></div>
<div class="abs" style="left:1808px;top:36px;width:12px;height:12px;background:#e3ecfb"></div><div class="abs" style="left:1820px;top:36px;width:12px;height:12px;background:#f0e2dc"></div><div class="abs" style="left:1832px;top:36px;width:12px;height:12px;background:#e4e5ec"></div><div class="abs" style="left:1844px;top:36px;width:12px;height:12px;background:#9cc2ff"></div>
<div class="abs" style="left:1820px;top:48px;width:24px;height:8px;background:#5f97e6;opacity:.7"></div>
<div class="abs" style="left:1866px;top:24px;width:36px;height:12px;background:linear-gradient(90deg,#6aa3ff 0 12px,#92bfff 12px 24px,#97b8ff 24px 36px)"></div>
</body></html>
